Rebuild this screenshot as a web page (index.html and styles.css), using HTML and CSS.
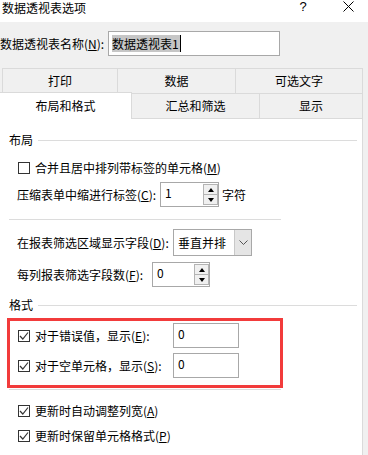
FILE: index.html
```html
<!DOCTYPE html>
<html lang="zh-CN">
<head>
<meta charset="utf-8">
<link rel="stylesheet" href="styles.css">
</head>
<body>
<div class="titlebar">
  <div class="title">数据透视表选项</div>
  <div class="controls">
    <span class="help">?</span>
    <svg class="close" width="11" height="11" viewBox="0 0 11 11"><path d="M0.5 0.5 L10.5 10.5 M10.5 0.5 L0.5 10.5" stroke="#000" stroke-width="1" fill="none"/></svg>
  </div>
</div>

<div class="namerow">
  <label class="namelabel">数据透视表名称(<u>N</u>):</label>
  <div class="nameinput"><span class="sel">数据透视表1</span><span class="caret"></span></div>
</div>

<div class="tabs1">
  <div class="tab t1">打印</div>
  <div class="tab t2">数据</div>
  <div class="tab t3">可选文字</div>
</div>
<div class="tabs2">
  <div class="tab2 active">布局和格式</div>
  <div class="tab2 t5">汇总和筛选</div>
  <div class="tab2 t6">显示</div>
</div>

<div class="panel">
  <div class="section"><span>布局</span><span class="rule"></span></div>

  <div class="row cbrow first">
    <span class="cb"></span>
    <span>合并且居中排列带标签的单元格(<u>M</u>)</span>
  </div>

  <div class="row fieldrow r-indent">
    <span class="lbl w-indent">压缩表单中缩进行标签(<u>C</u>):</span>
    <div class="spin w59"><span class="val">1</span><span class="btns"><span class="sb up"></span><span class="sb down"></span></span></div>
    <span class="unit">字符</span>
  </div>

  <div class="sep sep1"></div>

  <div class="row fieldrow r-drop">
    <span class="lbl w-drop">在报表筛选区域显示字段(<u>D</u>):</span>
    <div class="drop"><span class="val">垂直并排</span><span class="dbtn"><svg width="9" height="6" viewBox="0 0 9 6"><path d="M0.5 0.5 L4.5 4.5 L8.5 0.5" stroke="#555" stroke-width="1" fill="none"/></svg></span></div>
  </div>

  <div class="row fieldrow r-count">
    <span class="lbl w-count">每列报表筛选字段数(<u>F</u>):</span>
    <div class="spin w58"><span class="val">0</span><span class="btns"><span class="sb up"></span><span class="sb down"></span></span></div>
  </div>

  <div class="section s2"><span>格式</span><span class="rule"></span></div>

  <div class="redbox">
    <div class="row inrow">
      <span class="cb checked"><svg width="10" height="10" viewBox="0 0 10 10"><path d="M1 5 L3.8 8 L9 1.5" stroke="#333" stroke-width="1.2" fill="none"/></svg></span>
      <span class="lbl w-red">对于错误值，显示(<u>E</u>):</span>
      <div class="tbox"><span class="val">0</span></div>
    </div>
    <div class="row inrow second">
      <span class="cb checked"><svg width="10" height="10" viewBox="0 0 10 10"><path d="M1 5 L3.8 8 L9 1.5" stroke="#333" stroke-width="1.2" fill="none"/></svg></span>
      <span class="lbl w-red">对于空单元格，显示(<u>S</u>):</span>
      <div class="tbox"><span class="val">0</span></div>
    </div>
  </div>

  <div class="sep sep2"></div>

  <div class="row cbrow upd1">
    <span class="cb checked"><svg width="10" height="10" viewBox="0 0 10 10"><path d="M1 5 L3.8 8 L9 1.5" stroke="#333" stroke-width="1.2" fill="none"/></svg></span>
    <span>更新时自动调整列宽(<u>A</u>)</span>
  </div>
  <div class="row cbrow upd2">
    <span class="cb checked"><svg width="10" height="10" viewBox="0 0 10 10"><path d="M1 5 L3.8 8 L9 1.5" stroke="#333" stroke-width="1.2" fill="none"/></svg></span>
    <span>更新时保留单元格格式(<u>P</u>)</span>
  </div>
</div>
</body>
</html>
```

FILE: styles.css
```css
* { box-sizing: border-box; }
html, body { margin: 0; padding: 0; }
body {
  width: 368px;
  height: 455px;
  overflow: hidden;
  background: #f0f0f0;
  font-family: "Noto Sans CJK SC", "Microsoft YaHei", sans-serif;
  font-size: 12px;
  line-height: 16px;
  color: #000;
}
u { text-decoration: underline; text-underline-offset: 1px; }

.titlebar {
  height: 22px;
  background: #fff;
  display: flex;
  align-items: flex-start;
}
.title { margin-left: 2px; margin-top: 1px; line-height: 13px; }
.controls {
  margin-left: auto;
  margin-right: 14px;
  display: flex;
  align-items: flex-start;
}
.help { width: 10px; text-align: center; line-height: 13px; font-family: "Liberation Sans", sans-serif; font-size: 13px; }
.close { margin-left: 35px; margin-top: 1px; display: block; }

.namerow {
  margin-top: 9px;
  height: 25px;
  display: flex;
  align-items: center;
}
.namelabel { width: 108px; white-space: nowrap; }
.nameinput {
  width: 172px;
  height: 25px;
  border: 1px solid #a8a8a8;
  background: #fff;
  display: flex;
  align-items: center;
  padding-left: 3px;
}
.sel { background: #c6c6c6; height: 17px; line-height: 17px; padding-right: 1px; white-space: nowrap; }
.caret { width: 1px; height: 17px; background: #000; }

.tabs1 {
  margin-top: 12px;
  margin-left: 2px;
  height: 25px;
  display: flex;
  border-left: 1px solid #dadada;
  width: 361px;
}
.tab {
  height: 25px;
  border-top: 1px solid #dadada;
  border-right: 1px solid #dadada;
  display: flex;
  align-items: center;
  justify-content: center;
  padding-bottom: 1px;
}
.t1 { width: 115px; }
.t2 { width: 118px; }
.t3 { width: 127px; }

.tabs2 {
  margin-top: -1px;
  height: 27px;
  display: flex;
  align-items: flex-end;
  width: 363px;
}
.tab2 {
  height: 26px;
  border-top: 1px solid #dadada;
  border-right: 1px solid #dadada;
  border-bottom: 1px solid #dadada;
  display: flex;
  align-items: center;
  justify-content: center;
}
.tab2.active {
  width: 132px;
  height: 27px;
  background: #fff;
  border-bottom: none;
  padding-bottom: 1px;
}
.t5 { width: 128px; }
.t6 { width: 103px; }

.panel {
  width: 363px;
  height: 340px;
  background: #fff;
  border-right: 1px solid #dadada;
  padding: 0 5px 0 9px;
  display: flex;
  flex-direction: column;
}
.section {
  margin-top: 14px;
  height: 14px;
  display: flex;
  align-items: center;
}
.section .rule { flex: 1; height: 1px; background: #dcdcdc; margin-left: 5px; }
.section.s2 { margin-top: 11px; }

.row { display: flex; align-items: center; white-space: nowrap; }
.cbrow { height: 20px; padding-left: 9px; }
.cbrow.first { margin-top: 11px; }
.cbrow.upd1 { margin-top: 11px; }
.cbrow.upd2 { margin-top: 5px; }

.cb {
  width: 12px;
  height: 12px;
  border: 1px solid #333;
  background: #fff;
  margin-right: 5px;
  display: flex;
  align-items: center;
  justify-content: center;
  flex: none;
}
.cb svg { display: block; }

.fieldrow { padding-left: 8px; }
.r-indent { margin-top: 4px; height: 25px; }
.r-drop { margin-top: 9px; height: 27px; }
.r-count { margin-top: 6px; height: 25px; }
.lbl { flex: none; }
.w-indent { width: 143px; }
.w-drop { width: 156px; }
.w-count { width: 135px; }
.w-red { width: 138px; }
.unit { margin-left: 3px; }

.spin {
  height: 25px;
  border: 1px solid #a8a8a8;
  background: #fff;
  display: flex;
  align-items: stretch;
}
.w59 { width: 59px; }
.w58 { width: 58px; }
.spin .val { flex: 1; padding-left: 4px; line-height: 20px; }
.btns {
  width: 15px;
  padding: 1px 0 1px 0;
  display: flex;
  flex-direction: column;
}
.sb {
  flex: 1;
  border: 1px solid #b4b4b4;
  background: #f0f0f0;
  display: flex;
  align-items: center;
  justify-content: center;
}
.sb.down { margin-top: 0; border-top: none; }
.sb.up::after {
  content: "";
  border-left: 3.5px solid transparent;
  border-right: 3.5px solid transparent;
  border-bottom: 4px solid #000;
}
.sb.down::after {
  content: "";
  border-left: 3.5px solid transparent;
  border-right: 3.5px solid transparent;
  border-top: 4px solid #000;
}

.drop {
  width: 79px;
  height: 27px;
  border: 1px solid #a8a8a8;
  background: #fff;
  display: flex;
  align-items: stretch;
}
.drop .val { flex: 1; padding-left: 4px; display: flex; align-items: center; }
.dbtn {
  width: 17px;
  background: #e5e5e5;
  border-left: 1px solid #c8c8c8;
  display: flex;
  align-items: center;
  justify-content: center;
}
.dbtn svg { display: block; }

.sep { height: 1px; width: 272px; background: #dcdcdc; }
.sep1 { margin-top: 12px; }
.sep2 { margin-top: 1px; }

.redbox {
  margin-top: 6px;
  margin-left: -2px;
  width: 276px;
  border: 3px solid #f23b3b;
  padding: 2px 0 7px 8px;
}
.inrow { height: 25px; }
.inrow.second { margin-top: 5px; }
.tbox {
  width: 66px;
  height: 25px;
  border: 1px solid #a8a8a8;
  background: #fff;
  padding-left: 4px;
  line-height: 20px;
}
```
